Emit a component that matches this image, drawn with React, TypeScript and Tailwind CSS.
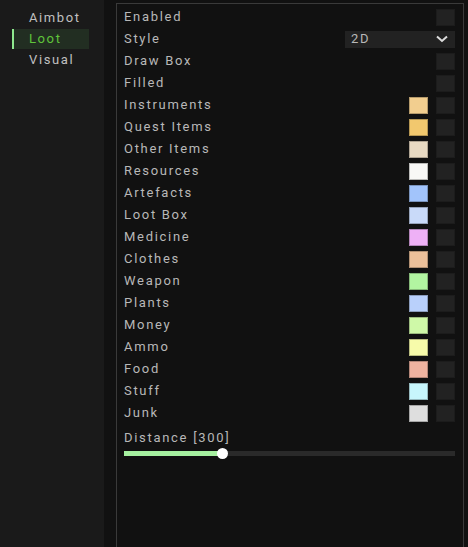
import { useState } from "react";

type Item = { label: string; color?: string };

const items: Item[] = [
  { label: "Instruments", color: "#f2ce8f" },
  { label: "Quest Items", color: "#f2c86e" },
  { label: "Other Items", color: "#e8dac3" },
  { label: "Resources", color: "#f8f8f6" },
  { label: "Artefacts", color: "#a2c4fb" },
  { label: "Loot Box", color: "#c9daf9" },
  { label: "Medicine", color: "#eeb0f6" },
  { label: "Clothes", color: "#ecc09a" },
  { label: "Weapon", color: "#b2f5a1" },
  { label: "Plants", color: "#b9d0fb" },
  { label: "Money", color: "#cff9a8" },
  { label: "Ammo", color: "#f7fbaa" },
  { label: "Food", color: "#efb3a0" },
  { label: "Stuff", color: "#c7f6fc" },
  { label: "Junk", color: "#dedede" },
];

const Checkbox = () => (
  <div className="w-[19px] h-[17px] bg-[#222222] border border-[#1c1c1c]" />
);

const Swatch = ({ color }: { color: string }) => (
  <div
    className="w-[19px] h-[17px] border border-black/25"
    style={{ backgroundColor: color }}
  />
);

const Row = ({ label, children }: { label: string; children?: React.ReactNode }) => (
  <div className="flex items-center h-[22px]">
    <span className="flex-1 text-[13px] tracking-[1.7px] text-[#b8b8b8]">{label}</span>
    {children}
  </div>
);

const App = () => {
  const [tab, setTab] = useState("Loot");
  const distance = 300;

  return (
    <div
      className="flex h-[547px] w-[468px] bg-[#111111] overflow-hidden"
      style={{ fontFamily: "Roboto, 'Noto Sans', sans-serif" }}
    >
      <div className="w-[104px] bg-[#1a1a1a] pt-2 pl-3 flex flex-col gap-px">
        {["Aimbot", "Loot", "Visual"].map(t => (
          <button
            key={t}
            onClick={() => setTab(t)}
            className={
              t === tab
                ? "w-[77px] h-5 flex items-center text-left border-l-2 border-[#8ee88e] bg-[#222e22] pl-[15px] text-[13px] tracking-[1.6px] text-[#5fc43a]"
                : "w-[77px] h-5 flex items-center text-left border-l-2 border-transparent pl-[15px] text-[13px] tracking-[1.6px] text-[#c0c0c0]"
            }
          >
            {t}
          </button>
        ))}
      </div>

      <div className="ml-3 mt-[3px] w-[348px] border-t border-x border-[#3a3a3a] pt-[2px] pl-[7px] pr-[8px]">
        <Row label="Enabled">
          <Checkbox />
        </Row>
        <Row label="Style">
          <div className="w-[110px] h-[17px] bg-[#222222] flex items-center justify-between pl-[6px] pr-[7px]">
            <span className="text-[13px] tracking-[1.7px] text-[#b8b8b8]">2D</span>
            <svg width="12" height="8" viewBox="0 0 12 8">
              <polyline points="1,1.5 6,6 11,1.5" fill="none" stroke="#dddddd" strokeWidth="2" />
            </svg>
          </div>
        </Row>
        <Row label="Draw Box">
          <Checkbox />
        </Row>
        <Row label="Filled">
          <Checkbox />
        </Row>
        {items.map(item => (
          <Row key={item.label} label={item.label}>
            <div className="flex gap-2">
              <Swatch color={item.color!} />
              <Checkbox />
            </div>
          </Row>
        ))}

        <div className="mt-[6px] h-4 leading-4 text-[13px] tracking-[1.7px] text-[#b8b8b8]">
          Distance [{distance}]
        </div>
        <div className="relative h-[14px] flex items-center">
          <div className="w-full h-[5px] bg-[#2a2a2a]">
            <div className="h-full bg-[#a6f0a0] w-[99px]" />
          </div>
          <div className="absolute left-[93px] top-[2px] w-[11px] h-[11px] rounded-full bg-white" />
        </div>
      </div>
    </div>
  );
};

export default App;
